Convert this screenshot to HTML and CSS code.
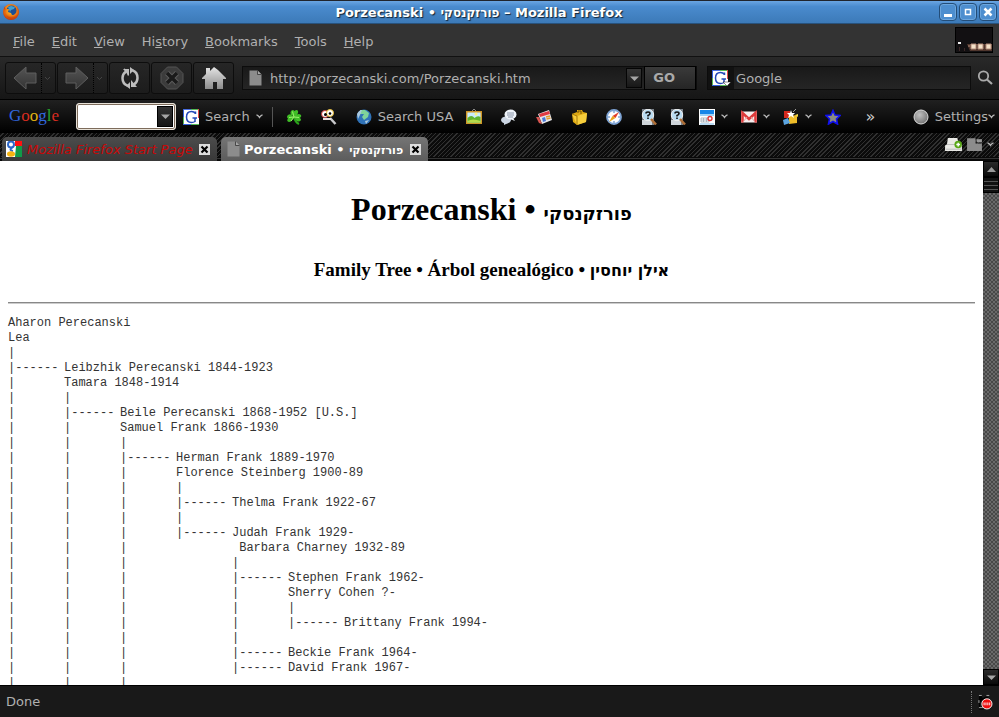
FILE: index.html
```html
<!DOCTYPE html>
<html lang="en">
<head>
<meta charset="utf-8">
<title>Porzecanski • פורזקנסקי</title>
<link rel="stylesheet" href="styles.css">
</head>
<body>
<svg class="defs" aria-hidden="true">
  <defs>
    <linearGradient id="metal" x1="0" y1="0" x2="0" y2="1"><stop offset="0" stop-color="#e4e4e4"/><stop offset="1" stop-color="#8c8c8c"/></linearGradient>
    <linearGradient id="dim" x1="0" y1="0" x2="0" y2="1"><stop offset="0" stop-color="#555"/><stop offset="1" stop-color="#333"/></linearGradient>
    <radialGradient id="fox" cx=".5" cy=".4" r=".6"><stop offset="0" stop-color="#ffd22e"/><stop offset=".6" stop-color="#f08015"/><stop offset="1" stop-color="#c23408"/></radialGradient>
    <radialGradient id="ball" cx=".4" cy=".35" r=".7"><stop offset="0" stop-color="#c0c0c0"/><stop offset="1" stop-color="#707070"/></radialGradient>
    <symbol id="chev" viewBox="0 0 7 5"><path d="M.5 1 Q2 1 3.500 3.500 Q5 1 6.500 1" fill="none" stroke="#b5b5b5" stroke-width="1.300"/></symbol>
    <symbol id="tri" viewBox="0 0 9 5"><path d="M0 .5h9L4.500 5z" fill="#a6a6a6"/></symbol>
    <symbol id="page" viewBox="0 0 13 16"><path d="M1 .5h8l4 4V15.500H1z" fill="#8c8c8c"/><path d="M9 .5v4h4" fill="#a8a8a8" stroke="#333" stroke-width=".8"/></symbol>
    <symbol id="query" viewBox="0 0 16 16"><path d="M1 0h12v16H1z" fill="#788088"/><path d="M1 11h10v5H1z" fill="#cfd5da"/><circle cx="7" cy="6" r="5.700" fill="#b9dcf2" stroke="#eee"/><path d="M5 4.500Q5 3 7 3t2 1.500Q9 5.700 7 6.500v1M7 8.500V10" fill="none" stroke="#111" stroke-width="1.600"/><path d="M10 10l5 5.500" stroke="#b07038" stroke-width="2.500"/></symbol>
    <symbol id="gicon" viewBox="0 0 16 16"><path d="M0 0h16v16H0z" fill="#fff"/><path d="M0 .5h8" stroke="#4a6ee0"/><path d="M8 .5h8M.5 16v-8" stroke="#57bb57"/><path d="M.5 0v8M0 15.500h8" stroke="#3763df"/><path d="M15.500 0v9" stroke="#e34a4a"/><path d="M8 15.500h8" stroke="#57bb57"/><path d="M12.500 5V2.500M12.500 4.500Q11 2.500 8.500 2.500 3.500 2.500 3.500 8t5 5.500q2 0 3.500-1V9M9.500 9h4.500" fill="none" stroke="#2449b8" stroke-width="1.500"/></symbol>
    <symbol id="x" viewBox="0 0 11 11"><path d="M2.500 2.500l6 6M8.500 2.500l-6 6" stroke="#000" stroke-width="2.200"/></symbol>
  </defs>
</svg>

<header class="titlebar">
  <svg class="i16" viewBox="0 0 16 16"><circle cx="8" cy="8" r="8" fill="url(#fox)"/><circle cx="8.500" cy="6.500" r="5" fill="#1d4e94"/><path d="M5 3l3-1 4 1-1 2-3 1-1 2z" fill="#42a0cf"/><path d="M1 3l2 2 3 0-1 3 3 1 1 2q4 1 6-4l-1-4q3 4 1 8-4 5-9 3T1 3z" fill="url(#fox)"/></svg>
  <div class="caption">Porzecanski • <span class="heb" dir="rtl">פורזקנסקי</span> – Mozilla Firefox</div>
  <div class="winbtns">
    <button aria-label="Minimize"><svg viewBox="0 0 16 16"><path d="M4 10h8v3H4z"/></svg></button>
    <button aria-label="Maximize"><svg viewBox="0 0 16 16"><path d="M5.500 5.500h5v5h-5z" fill="none" stroke="#fff" stroke-width="1.500"/></svg></button>
    <button aria-label="Close"><svg viewBox="0 0 16 16"><path d="M4.500 4.500l7 7M11.500 4.500l-7 7" stroke="#fff" stroke-width="2.500"/></svg></button>
  </div>
</header>

<nav class="menubar">
  <button><u>F</u>ile</button><button><u>E</u>dit</button><button><u>V</u>iew</button><button>Hi<u>s</u>tory</button><button><u>B</u>ookmarks</button><button><u>T</u>ools</button><button><u>H</u>elp</button>
  <svg class="throbber" viewBox="0 0 38 26"><path d="M0 0h38v26H0z" fill="#000"/><path d="M1 1h36v24H1z" fill="#121012"/><path d="M3 15h3v2H3z" fill="#eee"/><path d="M4 20h1v4H4zM9 21h1v3H9z" fill="#3d2828"/><path d="M12 17h25v7H15z" fill="#50362d"/><path d="M13 19h2M16 17h5v5h-5zM23 17h5v5h-5zM31 17h5v5h-5z" fill="#f4e1c8" stroke="#b28b78"/></svg>
</nav>

<div class="navbar">
  <div class="navbtns">
    <button class="split" aria-label="Back"><svg class="arrow" viewBox="0 0 24 24"><path d="M1 12L13 1v6h10v10H13v6z" fill="url(#dim)" stroke="#5e5e5e"/></svg><span class="drop"><svg viewBox="0 0 7 5" class="chev"><path d="M1 1l2.500 2.500L6 1" fill="none" stroke="#444"/></svg></span></button>
    <button class="split" aria-label="Forward"><svg class="arrow" viewBox="0 0 24 24"><path d="M23 12L11 1v6H1v10h10v6z" fill="url(#dim)" stroke="#5e5e5e"/></svg><span class="drop"><svg viewBox="0 0 7 5" class="chev"><path d="M1 1l2.500 2.500L6 1" fill="none" stroke="#444"/></svg></span></button>
    <button aria-label="Reload"><svg class="arrow" viewBox="0 0 24 24"><path d="M9.500 19.500Q4.500 18 4.500 12q0-4 3.500-6.500M14.500 4.500q5 1.500 5 7.500 0 4-3.500 6.500" fill="none" stroke="#bdbdbd" stroke-width="2.500"/><path d="M6 2l5 4-1 4zM5 3h6v7zM19 21h-6v-7z" fill="#bdbdbd"/><path d="M12 1v7l4-4zM12 23v-7l-4 4z" fill="#bdbdbd"/></svg></button>
    <button aria-label="Stop"><svg class="arrow" viewBox="0 0 24 24"><path d="M7.500 1h9L23 7.500v9L16.500 23h-9L1 16.500v-9z" fill="#3c3c3c" stroke="#555"/><path d="M7 7l10 10M17 7L7 17" stroke="#5d5d5d" stroke-width="5.500"/><path d="M7 7l10 10M17 7L7 17" stroke="#1a1a1a" stroke-width="3.500"/></svg></button>
    <button aria-label="Home"><svg class="arrow" viewBox="0 0 24 24"><path d="M12 1l4 3 8 8v1h-3v10h-6v-7h-4v7H3V13H0v-1l4-4V2h4v3z" fill="url(#metal)"/></svg></button>
  </div>
  <form class="address">
    <svg class="i16" aria-hidden="true"><use href="#page"/></svg>
    <input type="text" aria-label="Address" value="http://porzecanski.com/Porzecanski.htm">
    <button type="button" class="dropbtn" aria-label="Show history"><svg><use href="#tri"/></svg></button>
    <button type="button" class="go"><b>GO</b></button>
  </form>
  <form class="search">
    <button type="button" class="engine" aria-label="Search engine"><svg viewBox="0 0 20 16"><use href="#gicon" width="16" height="16"/><path d="M11 12h8l-4 4z" fill="#fff" stroke="#111" stroke-width=".5"/></svg></button>
    <input type="text" aria-label="Search" value="Google">
  </form>
  <button class="mag" aria-label="Go search"><svg class="i16" viewBox="0 0 16 16"><circle cx="6.500" cy="6" r="4.700" fill="none" stroke="#aaa" stroke-width="1.800"/><path d="M10 9.500l5 4.500" stroke="#aaa" stroke-width="2.200"/></svg></button>
</div>

<div class="toolbar">
  <div class="logo" aria-label="Google"><span class="bl">G</span><span class="rd">o</span><span class="ye">o</span><span class="bl">g</span><span class="gr">l</span><span class="rd">e</span></div>
  <div class="combo"><input type="text" aria-label="Google search"><button aria-label="Show searches"><svg><use href="#tri"/></svg></button></div>
  <button class="tool first"><svg class="i16"><use href="#gicon"/></svg>Search<svg class="chev"><use href="#chev"/></svg></button>
  <span class="sep"></span>
  <button class="tool" aria-label="Lucky"><svg class="i16" viewBox="0 0 16 16"><path d="M8 8q1 5 5 7" stroke="#2aa51b" stroke-width="2" fill="none"/><path d="M8 8Q3 5 5 2q2-2 3.500 0Q11 0 12 2q1 3-4 6zM8 8Q5 4 2 6q-2 2 0 3.500Q0 12 3 13q3 0 5-5zM8 8q4-5 7-2 1 1-1 3 2 2 0 3-3 2-6-4z" fill="#3fbd26"/><path d="M6.500 2.500l1.500 5.500-5 .5M8 8l5 .5M8 8l-3 4" stroke="#9cf06c" fill="none"/></svg><span></span></button>
  <button class="tool" aria-label="Find"><svg class="i16" viewBox="0 0 16 16"><path d="M9 9l5.500 6" stroke="#c9c9cc" stroke-width="2.500"/><circle cx="4" cy="5" r="3.500" fill="#fff" stroke="#c43636"/><circle cx="9" cy="4" r="3.500" fill="#fff" stroke="#e6bd36"/><circle cx="4.500" cy="5.500" r="1.500"/><circle cx="9" cy="4.500" r="1.300"/><path d="M2 10h8" stroke="#e7dfdf" stroke-width="2"/></svg><span></span></button>
  <button class="tool"><svg class="i16" viewBox="0 0 16 16"><circle cx="8" cy="8" r="7.500" fill="#2f72b8"/><path d="M4 1l5 0 4 3-1 4-4 3-2-3 2-3-4 0z" fill="#7fd39a"/><path d="M1 5q2-4 5-4L4 6l-2 4zM9 12l4-1-3 4z" fill="#a9c8df"/></svg>Search USA</button>
  <button class="tool" aria-label="Images"><svg class="i16" viewBox="0 0 16 16"><path d="M6 2l2-2 2 2" stroke="#888" fill="none"/><path d="M.7 2.700h14.600v11.600H.7z" fill="#c9ecfb" stroke="#cf9626" stroke-width="1.400"/><path d="M1.500 9q4-4 7 0 3-3 6-1v5.500h-13z" fill="#5fb52c"/><path d="M1.500 12q5-3 13 0v1.500h-13z" fill="#b7dc4a"/><circle cx="10" cy="5" r="1.500" fill="#fff57a"/></svg><span></span></button>
  <button class="tool" aria-label="Groups"><svg class="i16" viewBox="0 0 16 16"><ellipse cx="5" cy="11" rx="5" ry="3.500" fill="#cbd5e2"/><path d="M3 13v3l4-2z" fill="#cbd5e2"/><ellipse cx="9.500" cy="5.500" rx="6" ry="5" fill="#eef3f9"/><path d="M12 9l2 3-5-2z" fill="#eef3f9"/><path d="M6 4h7M6 6h7M7 8h5" stroke="#8a95a8"/></svg><span></span></button>
  <button class="tool" aria-label="News"><svg class="i16" viewBox="0 0 16 16"><path d="M2 5l11-4 3 10-10 4z" fill="#e5e5e9"/><path d="M3 5l10-3 1 3L4 8z" fill="#e13a42"/><path d="M6 9l3-1 1 4-3 1z" fill="#4878d8"/><path d="M10 8l4-1M10.500 10l4-1" stroke="#e49b2e" stroke-width="1.300"/><path d="M0 8h3l3 7-3-1z" fill="#d85450"/></svg><span></span></button>
  <button class="tool" aria-label="Products"><svg class="i16" viewBox="0 0 16 16"><path d="M1 5l5-2V1h5l1 2 4 1-1 9-9 3-4-3z" fill="#dfa912"/><path d="M1 5l5 2 10-3-1 9-9 3z" fill="#f7ce3c"/><path d="M7 4V2h3v3" fill="none" stroke="#70520a"/><path d="M1 5l5 2v9" fill="none" stroke="#a47909"/></svg><span></span></button>
  <button class="tool" aria-label="Maps"><svg class="i16" viewBox="0 0 16 16"><circle cx="8" cy="8" r="7" fill="#fff" stroke="#7fa5d6" stroke-width="1.800"/><path d="M13 3L9.500 9 6.500 7z" fill="#e23e28"/><path d="M3 13l3.500-6 3 2z" fill="#e8a620"/><path d="M8 2v2M8 12v2M2 8h2M12 8h2" stroke="#457bc0"/></svg><span></span></button>
  <button class="tool" aria-label="Lookup"><svg class="i16"><use href="#query"/></svg></button>
  <button class="tool" aria-label="Lookup word"><svg class="i16"><use href="#query"/></svg></button>
  <button class="tool" aria-label="Calendar"><svg class="i16" viewBox="0 0 16 16"><path d="M0 0h16v16H0z" fill="#fff"/><path d="M1 1h14v4H1z" fill="#1686e8"/><path d="M1 5h14v2H1z" fill="#9fd3f8"/><path d="M2 9h8v4H2zM2 11h8M4.500 9v4M7.500 9v4" fill="none" stroke="#9daab6" stroke-width=".8"/><circle cx="11" cy="9.500" r="2" fill="#fff" stroke="#e33838" stroke-width="1.400"/><path d="M1 15h14" stroke="#76b7e9"/></svg><svg class="chev"><use href="#chev"/></svg></button>
  <button class="tool" aria-label="Mail"><svg class="i16" viewBox="0 0 16 16"><path d="M0 2.500h16v11H0z" fill="#f7eded"/><path d="M1.500 13.500V4L8 10l6.500-6v9.500" fill="none" stroke="#dd3a3a" stroke-width="2.600"/><path d="M2 13l4-5M14 13l-4-5" stroke="#e2a0a0"/></svg><svg class="chev"><use href="#chev"/></svg></button>
  <button class="tool" aria-label="Gadgets"><svg class="i16" viewBox="0 0 16 16"><path d="M1 2h6v7H1z" fill="#d32a1e"/><path d="M6 7l8-1v8l-8 1z" fill="#eebd29"/><path d="M0 11l5-2 2 5-6 2z" fill="#5ba4e0"/><path d="M8 1l1 3 3 0-2 2 1 3-3-2-3 2 1-3-2-2 3 0z" fill="#fff"/><path d="M10 3l3-3" stroke="#999"/><path d="M12 6l3-1v3z" fill="#f2d844"/></svg><svg class="chev"><use href="#chev"/></svg></button>
  <button class="tool" aria-label="Bookmarks"><svg class="i16" viewBox="0 0 16 16"><path d="M8 1.500l2 4.500 5 .5-3.500 3.500 1 5L8 12.500 3.500 15l1-5L1 6.500 6 6z" fill="#8c8c80" stroke="#1010f0" stroke-width="1.600"/></svg></button>
  <button class="tool more">»</button>
  <button class="tool settings"><svg class="i16" viewBox="0 0 16 16"><circle cx="8" cy="8" r="7" fill="url(#ball)" stroke="#ddd"/></svg>Settings<svg class="chev"><use href="#chev"/></svg></button>
</div>

<div class="tabstrip">
  <div class="tab">
    <svg class="i16" viewBox="0 0 16 16"><path d="M0 0h16v16H0z" fill="#fff"/><path d="M9 0h7v5H9z" fill="#f11"/><path d="M10 5h6v11H9z" fill="#109a48"/><circle cx="5" cy="3.500" r="3" fill="none" stroke="#2d68ca" stroke-width="2"/><path d="M7 6Q2 9 7 10" fill="none" stroke="#2d68ca" stroke-width="2"/><ellipse cx="5" cy="13" rx="4" ry="2.700" fill="#f5b412"/></svg>
    <a href="#">Mozilla Firefox Start Page</a>
    <button class="x" aria-label="Close tab"><svg><use href="#x"/></svg></button>
  </div>
  <div class="tab active">
    <svg class="i16"><use href="#page"/></svg>
    <a href="#">Porzecanski • <span class="heb" dir="rtl">פורזקנסקי</span></a>
    <button class="x" aria-label="Close tab"><svg><use href="#x"/></svg></button>
  </div>
  <div class="tabtools">
    <svg class="newtab" viewBox="0 0 18 16"><path d="M3 1h10l2 7h3v7H0V9l2-1z" fill="#e9e9e5"/><path d="M2 8h13M1 13h16" stroke="#bbb"/><circle cx="14" cy="8" r="4" fill="#58a716"/><path d="M14 6v4M12 8h4" stroke="#fff" stroke-width="1.500"/></svg>
    <svg class="newtab" viewBox="0 0 16 14"><path d="M1 1h8v5h6v7H1z" fill="#8c8c8c"/><path d="M10 2h5v3h-5z" fill="#999"/></svg>
    <svg class="chev"><use href="#chev"/></svg>
  </div>
</div>

<div class="view">
<main>
<h1>Porzecanski • <span class="heb" dir="rtl">פורזקנסקי</span></h1>
<h2>Family Tree • Árbol genealógico • <span class="heb" dir="rtl">אילן יוחסין</span></h2>
<hr>
<pre>Aharon Perecanski
Lea
|
|------&#9;Leibzhik Perecanski 1844-1923
|&#9;Tamara 1848-1914
|&#9;|
|&#9;|------&#9;Beile Perecanski 1868-1952 [U.S.]
|&#9;|&#9;Samuel Frank 1866-1930
|&#9;|&#9;|
|&#9;|&#9;|------&#9;Herman Frank 1889-1970
|&#9;|&#9;|&#9;Florence Steinberg 1900-89
|&#9;|&#9;|&#9;|
|&#9;|&#9;|&#9;|------&#9;Thelma Frank 1922-67
|&#9;|&#9;|&#9;|
|&#9;|&#9;|&#9;|------&#9;Judah Frank 1929-
|&#9;|&#9;|&#9;&#9; Barbara Charney 1932-89
|&#9;|&#9;|&#9;&#9;|
|&#9;|&#9;|&#9;&#9;|------&#9;Stephen Frank 1962-
|&#9;|&#9;|&#9;&#9;|&#9;Sherry Cohen ?-
|&#9;|&#9;|&#9;&#9;|&#9;|
|&#9;|&#9;|&#9;&#9;|&#9;|------&#9;Brittany Frank 1994-
|&#9;|&#9;|&#9;&#9;|
|&#9;|&#9;|&#9;&#9;|------&#9;Beckie Frank 1964-
|&#9;|&#9;|&#9;&#9;|------&#9;David Frank 1967-
|&#9;|&#9;|</pre>
</main>
<div class="scroll">
  <button aria-label="Scroll up"><svg viewBox="0 0 9 5"><path d="M0 5h9L4.500 0z" fill="#999"/></svg></button>
  <div class="thumb"></div>
  <button class="down" aria-label="Scroll down"><svg><use href="#tri"/></svg></button>
</div>
</div>

<footer class="status">
  <span>Done</span>
  <svg class="noscript" viewBox="0 0 16 16"><path d="M1 1h3l1 3 3-2 3 1v3H4L2 9v5h4v2H1z" fill="#000"/><path d="M1 1h3M9 1h3M1 14h5M1 6v3" stroke="#aaa"/><circle cx="9.500" cy="10" r="5.400" fill="#f00c0c" stroke="#fff"/><path d="M6.500 8.500v3M8.500 8.500v3M10.500 8.500v3M12.500 8.500v3" stroke="#fff"/></svg>
</footer>
</body>
</html>
```
FILE: styles.css
```css
* { box-sizing: border-box; }
body {
  margin: 0;
  height: 100vh;
  display: flex;
  flex-direction: column;
  overflow: hidden;
  background: #191919;
  color: #b0b0b0;
  font: 13px/16px "DejaVu Sans", sans-serif;
}
svg { display: block; flex: none; }
.defs { position: absolute; width: 0; height: 0; }
button, input {
  font: inherit;
  color: inherit;
  background: none;
  border: 0;
  padding: 0;
  margin: 0;
  min-width: 0;
}
form { display: flex; margin: 0; }
.i16 { width: 16px; height: 16px; }
.chev { width: 7px; height: 5px; }

.titlebar {
  height: 24px;
  flex: none;
  display: flex;
  align-items: center;
  padding: 0 2px 0 3px;
  border-top: 1px solid #20242c;
  border-bottom: 1px solid #28527c;
  background: linear-gradient(#6aa5e2, #4a8bce 25%, #3c7ab8);
}
.caption {
  flex: 1;
  padding-top: 2px;
  text-align: center;
  color: #fff;
  font-weight: bold;
  text-shadow: 1px 1px 1px #123;
}
.heb { font-family: "DejaVu Sans", sans-serif; font-size: 12px; line-height: 1; unicode-bidi: isolate; }
.winbtns { display: flex; gap: 2px; }
.winbtns button {
  width: 18px;
  height: 18px;
  border: 1px solid #234d78;
  border-radius: 4px;
  background: #4d8ecf;
  box-shadow: inset 0 0 0 1px #6ca6de;
}
.winbtns svg { fill: #fff; }

.menubar {
  height: 32px;
  flex: none;
  display: flex;
  align-items: center;
  gap: 17px;
  padding: 3px 6px 0 13px;
  background: #333;
}
.throbber { width: 38px; height: 26px; margin: -3px 0 0 auto; }

.navbar {
  height: 44px;
  flex: none;
  display: flex;
  align-items: center;
  padding: 0 6px 0 5px;
  border-top: 1px solid #111;
  border-bottom: 1px solid #000;
  background: linear-gradient(#292929, #161616);
}
.navbtns { display: flex; gap: 1px; }
.navbtns button {
  width: 41px;
  height: 32px;
  display: flex;
  align-items: center;
  justify-content: center;
  border: 1px solid #0d0d0d;
  border-radius: 3px;
  background: linear-gradient(#262626, #1c1c1c);
}
.navbtns .split { width: 51px; padding-left: 4px; }
.arrow { width: 24px; height: 24px; }
.drop {
  align-self: stretch;
  display: flex;
  align-items: center;
  padding: 0 2px;
  margin-left: 4px;
  border-left: 1px dotted #000;
}
.address {
  flex: 403;
  height: 24px;
  align-items: center;
  margin-left: 8px;
  padding-left: 4px;
  border: 1px solid #0c0c0c;
  background: linear-gradient(#191919, #252525);
}
.address input { flex: 1; padding: 2px 0 0 7px; }
.dropbtn {
  width: 16px;
  height: 20px;
  display: grid;
  place-items: center;
  border: 1px solid #050505;
  background: linear-gradient(#353535, #181818);
}
.dropbtn svg, .combo svg, .scroll svg { width: 9px; height: 5px; }
.go {
  width: 52px;
  height: 24px;
  margin-left: 2px;
  padding-right: 12px;
  border: 1px solid #000;
  background: linear-gradient(#3a3a3a, #252525);
}
.go b { color: #aaa; font-size: 13px; }
.search {
  flex: 235;
  height: 24px;
  align-items: center;
  margin-left: 10px;
  border: 1px solid #0c0c0c;
  background: linear-gradient(#191919, #252525);
}
.engine { padding: 3px 2px 3px 4px; background: #111; }
.engine svg { width: 20px; height: 16px; }
.search input { flex: 1; padding: 2px 0 0 2px; }
.mag { margin-left: 6px; }

.toolbar {
  height: 33px;
  flex: none;
  display: flex;
  align-items: center;
  gap: 1px;
  padding: 0 4px 0 9px;
  background: linear-gradient(#202020, #000);
}
.logo { width: 66px; padding-bottom: 2px; font: 17px/20px "Liberation Serif", serif; }
.bl { color: #3268e0; }
.rd { color: #d92c20; }
.ye { color: #e3b414; }
.gr { color: #26a62e; }
.combo {
  width: 100px;
  height: 27px;
  display: flex;
  padding: 2px;
  border: 1px solid #e8e2d8;
  border-radius: 3px;
  background: #fff;
  box-shadow: inset 0 0 0 1px #7d6c5c;
}
.combo input { flex: 1; color: #000; }
.combo button {
  width: 16px;
  display: grid;
  place-items: center;
  border: 1px solid #000;
  background: linear-gradient(#333, #151515);
}
.tool {
  display: flex;
  align-items: center;
  gap: 6px;
  padding: 0 6px;
  white-space: nowrap;
}
.sep { width: 1px; height: 20px; margin: 0 6px 0 2px; background: #555; }
.more { padding: 0 17px; color: #ccc; font-size: 16px; }
.settings { margin-left: auto; padding: 0; }
.settings .chev { margin-left: -6px; }

.tabstrip {
  height: 28px;
  flex: none;
  display: flex;
  align-items: flex-end;
  gap: 4px;
  padding: 4px 5px 0 2px;
  background:
    linear-gradient(#333, #333) 0 25px / 100% 1px no-repeat,
    linear-gradient(#080808, #080808) 0 24px / 100% 4px no-repeat,
    repeating-linear-gradient(135deg, #0b0b0b 0 2px, #303030 2px 3px);
}
.tab {
  width: 215px;
  height: 24px;
  display: flex;
  align-items: center;
  padding: 0 7px 0 4px;
  border-radius: 5px 5px 0 0;
  background: linear-gradient(#4c4c4c, #383838);
}
.tab a {
  flex: 1;
  padding: 1px 0 0 5px;
  white-space: nowrap;
  font-style: italic;
  color: #c80808;
  text-decoration: none;
}
.tab.active { width: 207px; background: linear-gradient(#757575, #5c5c5c); }
.tab.active a { padding-left: 3px; color: #fff; font-style: normal; font-weight: bold; }
.tab .heb { font-size: 11px; }
.x { width: 11px; height: 11px; background: #ddd; }
.x svg { width: 11px; height: 11px; }
.tabtools { display: flex; align-items: center; align-self: flex-start; gap: 4px; margin-left: auto; }
.newtab { width: 17px; height: 15px; }

.view { flex: 1; min-height: 0; display: flex; background: #fff; }
main {
  flex: 1;
  min-width: 0;
  overflow: hidden;
  padding: 30px 8px 0;
  color: #000;
  font-family: "Liberation Serif", serif;
}
h1, h2 { margin: 0; text-align: center; font-weight: bold; }
h1 { font-size: 32px; line-height: 37px; }
h2 { margin-top: 31px; font-size: 19px; line-height: 22px; }
h1 .heb { font-size: 18px; }
h2 .heb { font-size: 16px; }
hr { margin: 21px 0 12px; border: 0; border-top: 1px solid #888; border-bottom: 1px solid #ccc; }
pre { margin: 0; color: #333; font: 12px/15px "Liberation Mono", monospace; tab-size: 56px; }
.scroll {
  width: 16px;
  display: flex;
  flex-direction: column;
  background: repeating-conic-gradient(#6a6a6a 0 25%, #484848 0 50%) 0 0 / 4px 4px;
}
.scroll button, .thumb {
  height: 16px;
  flex: none;
  display: grid;
  place-items: center;
  border: 1px solid #000;
  background: linear-gradient(#2a2a2a, #0a0a0a);
}
.thumb { background: repeating-linear-gradient(#111 0 3px, #555 3px 4px); }
.scroll .down { margin-top: auto; }

.status {
  height: 32px;
  flex: none;
  display: flex;
  align-items: center;
  justify-content: space-between;
  padding: 0 6px;
  border-top: 1px solid #000;
  background: #191919;
}
.noscript { width: 22px; height: 22px; padding-left: 6px; border-left: 1px dotted #777; }
```
